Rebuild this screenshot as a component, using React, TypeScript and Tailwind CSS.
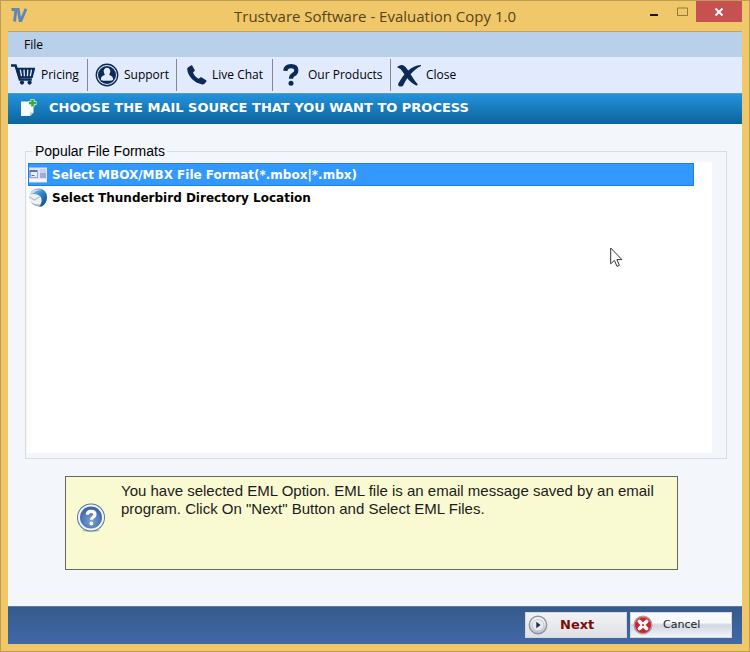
import { useState } from 'react';
import type { ReactNode } from 'react';

const CartIcon = () => (
  <svg viewBox="0 0 24 22" className="w-6 h-[22px] shrink-0" fill="none" stroke="#0b2a56">
    <path d="M0 1.5h4.600l4.200 14h12" strokeWidth="2.400" />
    <path d="M5.500 4.500h17.800l-2.300 8.600H8.200z" strokeWidth="1.600" fill="#0b2a56" />
    <path d="M9.300 5.600l1.200 6.600M13 5.600l.4 6.600M16.800 5.600l-.4 6.600M20.500 5.600l-1.200 6.600" stroke="#e2ebfd" strokeWidth="1.300" />
    <circle cx="11" cy="18.600" r="2.100" fill="#0b2a56" stroke="none" />
    <circle cx="18.600" cy="18.600" r="2.100" fill="#0b2a56" stroke="none" />
  </svg>
);

const SupportIcon = () => (
  <svg viewBox="0 0 24 24" className="size-6 shrink-0">
    <circle cx="12" cy="12" r="10.700" fill="none" stroke="#0b2a56" strokeWidth="1.400" />
    <circle cx="12" cy="12" r="9" fill="#0b2a56" />
    <path
      d="M12 4.800c2.300 0 3.400 1.800 3.300 3.800-.1 1.200-.5 2.100-1.100 2.900.2 1.100 3.400 1.100 3.700 3.600l.1 1.800c-3 1.200-9 1.200-12 0l.1-1.800c.3-2.500 3.500-2.500 3.700-3.600-.6-.8-1-1.700-1.100-2.900-.1-2 1-3.800 3.300-3.800z"
      fill="#e2ebfd"
    />
  </svg>
);

const PhoneIcon = () => (
  <svg viewBox="0 0 20 20" className="size-5 shrink-0" fill="#0b2a56">
    <path d="M1.200 2.200L4 .4c.5-.3 1-.2 1.300.3l2.400 4.200c.3.500.1 1-.3 1.300L6 7.300c.8 2.900 2.800 5.200 5.700 6.400l1.600-1.200c.5-.4 1-.4 1.500-.1l4.300 2.900c.5.300.6.900.2 1.400l-1.900 2.100c-.5.600-1.300.8-2.200.6C7 18 1 11.500.2 4.300c-.1-.9.2-1.600 1-2.100z" />
  </svg>
);

const QuestionIcon = () => (
  <svg viewBox="0 0 16 22" className="w-4 h-[22px] shrink-0" fill="none">
    <path d="M2.400 6.800C2.600 3.600 4.600 2.200 8 2.200c3.400 0 5.300 1.700 5.300 4.200 0 2.200-1.300 3.200-2.800 4.200-1.700 1.100-2.500 1.900-2.500 4.200" stroke="#0b2a56" strokeWidth="4.200" />
    <circle cx="8" cy="19.300" r="2.500" fill="#0b2a56" />
  </svg>
);

const CrossIcon = () => (
  <svg viewBox="0 0 24 23" className="w-6 h-[23px] shrink-0" fill="#0b2a56">
    <path d="M0 3.500C1.800 1 5.200.3 7.400 2c4.400 4 6.800 10.400 13.300 18.300.2.700-.6 1.300-1.500 1.100C11.900 18.700 7.300 9.800 3.900 5.600 2.900 4.300 1.500 3.800 0 3.500z" />
    <path d="M23.800 1c.5.400.3 1-.2 1.300C16 6.200 10 13.500 6.200 21.400c-.9 1.700-4.500 1.400-5-.4-.2-.9.100-1.700.7-2.500C6.800 10.300 14 1.400 23.800 1z" />
  </svg>
);

const NewPageIcon = () => (
  <svg viewBox="0 0 17 18" className="w-[17px] h-[18px] shrink-0">
    <path d="M1 2.500h12.500v11L10 17H1z" fill="#f8fbfc" />
    <path d="M10 17v-3.500h3.500z" fill="#b9c8ce" />
    <path d="M12.500 0v8M8.500 4h8" stroke="#e6f7e4" strokeWidth="4" />
    <path d="M12.500 .5v7M9 4h7" stroke="#35ad36" strokeWidth="2.600" />
  </svg>
);

const MailCardIcon = () => (
  <svg viewBox="0 0 20 18" className="w-5 h-[18px] shrink-0">
    <path d="M1 1.500h18v15H1z" fill="#dfe3f5" />
    <path d="M1 4h9v8H1z" fill="#8fa3dc" />
    <path d="M3 6h6v5H3z" fill="#e9ecfa" />
    <path d="M2 5h7" stroke="#4a5fae" strokeWidth="1.500" />
    <path d="M12 3h6v9h-6z" fill="#a9a6e6" />
    <path d="M12 3h6v4h-6z" fill="#c4d4f8" />
    <path d="M2 14.500h16" stroke="#fff" strokeWidth="2" />
    <path d="M3.500 9.500h3" stroke="#5a6bb4" />
  </svg>
);

const ThunderbirdIcon = () => (
  <svg viewBox="0 0 20 20" className="size-5 shrink-0">
    <defs>
      <linearGradient id="bird" x1="0" y1="0" x2="1" y2="1">
        <stop offset="0" stopColor="#b5d6ee" />
        <stop offset=".5" stopColor="#2f83c6" />
        <stop offset="1" stopColor="#113f86" />
      </linearGradient>
    </defs>
    <path d="M3 3.500C7-.5 14-.5 17.500 4c3 4.500 1.500 11-3 14-1 .6-2.500.8-3.500.5L1.500 10z" fill="url(#bird)" />
    <path d="M.8 7.500C4 5 9.500 6 12 8.200c2.500 2.500 2 6.300-.5 9.300C5.500 18 .5 14 .8 7.500z" fill="#eff2f4" />
    <path d="M1.200 8.800l5.300 3.200 5-3.300" fill="none" stroke="#b4bec9" strokeWidth="1.100" />
    <path d="M2 6C4 1.500 10 .5 14 2.500c-4-.5-6.500.5-8 2.300z" fill="#c6e0f2" />
    <path d="M2 13c2 3.500 5 5.600 9 5.500l2-2.300c-4 .6-8 0-11-3.200z" fill="#a5b1be" />
  </svg>
);

const HelpIcon = () => (
  <svg viewBox="0 0 30 30" className="size-[30px] shrink-0">
    <defs>
      <radialGradient id="help" cx=".5" cy=".65" r=".6">
        <stop offset="0" stopColor="#7ba3d8" />
        <stop offset="1" stopColor="#3d62a8" />
      </radialGradient>
    </defs>
    <ellipse cx="15" cy="27.500" rx="9" ry="1.500" fill="#c6c7a8" />
    <circle cx="15" cy="14.500" r="14" fill="#5576a8" />
    <circle cx="15" cy="14.500" r="13" fill="#f5f8fc" />
    <circle cx="15" cy="14.500" r="11" fill="url(#help)" />
    <path d="M11.300 11.800c.1-2.300 1.500-3.500 3.800-3.500s3.900 1.200 3.900 3.100c0 2.700-3.500 2.700-3.500 5.400" fill="none" stroke="#fff" strokeWidth="3.200" />
    <circle cx="15.400" cy="20.500" r="1.900" fill="#fff" />
  </svg>
);

const NextIcon = () => (
  <svg viewBox="0 0 20 20" className="size-5 shrink-0">
    <defs>
      <linearGradient id="next" x1="0" y1="0" x2="0" y2="1">
        <stop offset="0" stopColor="#fff" />
        <stop offset="1" stopColor="#b9bdc6" />
      </linearGradient>
    </defs>
    <circle cx="10" cy="10" r="8.700" fill="url(#next)" stroke="#92959d" strokeWidth="1.400" />
    <circle cx="10" cy="10" r="5.800" fill="#e7eaf0" stroke="#c9ccd4" />
    <path d="M8.300 6.700l4.300 3.300-4.300 3.300z" fill="#1c2c50" />
  </svg>
);

const CancelIcon = () => (
  <svg viewBox="0 0 20 20" className="size-5 shrink-0">
    <circle cx="10" cy="10" r="8.800" fill="#cf2430" stroke="#a9a3a8" strokeWidth="1.500" />
    <path d="M3.500 7C5 3.500 8 2.300 10 2.300S15 3.500 16.500 7" fill="none" stroke="#e4636b" />
    <path d="M6.500 6.500l7 7M13.500 6.500l-7 7" stroke="#fff" strokeWidth="3.800" strokeLinecap="round" />
    <circle cx="10" cy="10" r="1" fill="#cf2430" />
  </svg>
);

const tools = [
  { label: 'Pricing', icon: <CartIcon />, className: 'w-[80px] pl-[3px] gap-[6px]' },
  { label: 'Support', icon: <SupportIcon />, className: 'w-[89px] pl-[7px] gap-[5px]' },
  { label: 'Live Chat', icon: <PhoneIcon />, className: 'w-[96px] pl-[10px] gap-[5px]' },
  { label: 'Our Products', icon: <QuestionIcon />, className: 'w-[118px] pl-[10px] gap-[9px]' },
  { label: 'Close', icon: <CrossIcon />, className: 'w-[76px] pl-[6px] gap-[5px]' },
];

const formats: { label: string; icon: ReactNode }[] = [
  { label: 'Select MBOX/MBX File Format(*.mbox|*.mbx)', icon: <MailCardIcon /> },
  { label: 'Select Thunderbird Directory Location', icon: <ThunderbirdIcon /> },
];

export default function App() {
  const [selected, setSelected] = useState(0);

  return (
    <div className="relative min-h-screen flex flex-col border border-[#bd9c55] bg-[#f0c869] px-[7px] pb-[7px] font-['Open_Sans',sans-serif] text-black">
      {/* Title bar */}
      <header className="relative h-[30px] flex items-center justify-center">
        <svg viewBox="0 0 16 14" className="absolute left-[3px] top-[7px] w-4 h-[14px]" fill="none" stroke="#5f86b5" strokeWidth="2.800">
          <path d="M.5 1.500h8M5 1.500L3.500 13.500M7.500 3l1.500 9.500h1L15 .8" />
        </svg>
        <h1 className="text-[15px] text-[#57431b]">Trustvare Software - Evaluation Copy 1.0</h1>
        <div className="absolute top-0 right-0 flex">
          <button aria-label="Minimize" className="w-7 h-[21px] flex justify-center items-center">
            <svg viewBox="0 0 8 8" className="size-2"><path d="M0 7h8" stroke="#1c1607" strokeWidth="2" /></svg>
          </button>
          <button aria-label="Maximize" className="w-7 h-[21px] flex justify-center items-center">
            <svg viewBox="0 0 11 9" className="w-[11px] h-[9px]"><path d="M.5 1h10v7.500H.5z" fill="none" stroke="#94783a" /></svg>
          </button>
          <button aria-label="Close window" className="w-[46px] h-[21px] flex justify-center items-center bg-[#c75050]">
            <svg viewBox="0 0 8 8" className="size-2"><path d="M.5 .5l7 7M7.500 .5l-7 7" stroke="#fff" strokeWidth="2" /></svg>
          </button>
        </div>
      </header>

      <div className="flex-1 flex flex-col border-t border-[#c5a35a]">
        <nav className="h-[25px] flex items-center bg-[#b9d0ea] pl-4">
          <button className="text-xs">File</button>
        </nav>

        <div className="h-9 flex items-center bg-[#e2ebfd]">
          {tools.map((tool, i) => (
            <button
              key={tool.label}
              className={`h-8 flex items-center text-xs whitespace-nowrap ${tool.className} ${i < tools.length - 1 ? 'border-r border-[#85888f]' : ''}`}
            >
              {tool.icon}
              {tool.label}
            </button>
          ))}
        </div>

        <div className="h-[31px] flex items-center gap-3 pl-3 pb-[2px] border-t border-[#4d9fd2] bg-linear-to-b from-[#2493db] to-[#0b649d]">
          <NewPageIcon />
          <h2 className="font-['DejaVu_Sans',sans-serif] text-[13px] font-bold text-white whitespace-nowrap">
            CHOOSE THE MAIL SOURCE THAT YOU WANT TO PROCESS
          </h2>
        </div>

        <main className="flex-1 flex flex-col bg-[#f3f7fc] pt-[18px] pb-9 pl-[17px] pr-[15px]">
          <fieldset className="flex-1 border border-[#d8dce1] pt-[2px] pl-px pr-[14px] pb-[5px]">
            <legend className="ml-[6px] px-[2px] font-['Liberation_Sans',sans-serif] text-sm leading-[18px]">
              Popular File Formats
            </legend>
            <div role="listbox" aria-label="Popular File Formats" className="min-h-[291px] bg-white pt-px pl-px pr-[18px]">
              {formats.map((format, i) => (
                <button
                  key={format.label}
                  role="option"
                  aria-selected={selected === i}
                  onClick={() => setSelected(i)}
                  className={`w-full h-[23px] flex items-center gap-1 font-['DejaVu_Sans',sans-serif] text-xs font-bold ${
                    selected === i ? 'inset-ring inset-ring-[#1c7fe6] bg-[#3399ff] text-white' : ''
                  }`}
                >
                  {format.icon}
                  {format.label}
                </button>
              ))}
            </div>
          </fieldset>

          <section className="mt-[17px] ml-10 mr-[49px] min-h-[94px] flex items-start border border-[#67685a] bg-[#f9f9d2] pl-[10px] pr-5 pt-[5px]">
            <div className="pt-[21px]">
              <HelpIcon />
            </div>
            <p className="ml-[15px] font-['Liberation_Sans',sans-serif] text-[15px] leading-[18px] text-[#1b1b1b]">
              You have selected EML Option. EML file is an email message saved by an email program. Click On "Next"
              Button and Select EML Files.
            </p>
          </section>
        </main>

        <footer className="h-[38px] flex items-center justify-end gap-[3px] pr-[10px] pb-px border-t border-[#5b7ba6] bg-linear-to-b from-[#365a8b] to-[#4169a8]">
          <button className="w-[102px] h-[26px] flex items-center gap-3 pl-[2px] border border-[#d3d8e0] bg-linear-to-b from-[#f3f3f4] to-[#dfe1e6] font-['DejaVu_Sans',sans-serif] text-[13px] font-bold text-[#7c0b0b]">
            <NextIcon />
            Next
          </button>
          <button className="w-[102px] h-[26px] flex items-center gap-[10px] pl-[2px] border border-[#d3d8e0] bg-linear-to-b from-[#f8f9fb] from-40% via-[#d0d7e3] via-50% to-[#f1f3f7] font-['DejaVu_Sans',sans-serif] text-[11px] text-[#1b1b1b]">
            <CancelIcon />
            Cancel
          </button>
        </footer>
      </div>

      {/* Mouse pointer */}
      <svg viewBox="0 0 13 21" className="absolute left-[609px] top-[246px] w-[13px] h-[21px] pointer-events-none">
        <path d="M.7 1v15.800l3.700-3.400 2.600 6 2.400-1.100-2.500-5.700h5z" fill="#fff" stroke="#333" />
      </svg>
    </div>
  );
}
